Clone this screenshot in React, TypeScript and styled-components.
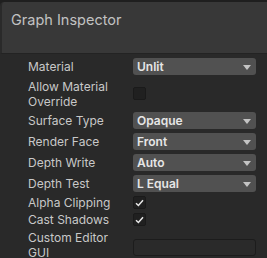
import {FC} from "react"
import styled, {createGlobalStyle} from "styled-components"

const GlobalStyle = createGlobalStyle`
  html, body {
    margin: 0;
    padding: 0;
    background: #1f1f1f;
  }
  body {
    font-family: Inter, "Noto Sans", sans-serif;
    -webkit-font-smoothing: antialiased;
  }
`

type Field =
	| {kind: "dropdown", value: string}
	| {kind: "checkbox", checked: boolean}
	| {kind: "text"}

interface IRow {
	label: string
	field: Field
	tall?: boolean
}

const rows: IRow[] = [
	{label: "Material", field: {kind: "dropdown", value: "Unlit"}},
	{label: "Allow Material Override", field: {kind: "checkbox", checked: false}, tall: true},
	{label: "Surface Type", field: {kind: "dropdown", value: "Opaque"}},
	{label: "Render Face", field: {kind: "dropdown", value: "Front"}},
	{label: "Depth Write", field: {kind: "dropdown", value: "Auto"}},
	{label: "Depth Test", field: {kind: "dropdown", value: "L Equal"}},
	{label: "Alpha Clipping", field: {kind: "checkbox", checked: true}},
	{label: "Cast Shadows", field: {kind: "checkbox", checked: true}},
	{label: "Custom Editor GUI", field: {kind: "text"}, tall: true},
]

const Arrow: FC = () => (
	<svg width="8" height="5" viewBox="0 0 8 5">
		<path d="M0 0 H8 L4 5 Z" fill="#c4c4c4"/>
	</svg>
)

const Check: FC = () => (
	<svg width="9" height="8" viewBox="0 0 9 8">
		<path d="M1 4.2 L3.4 6.5 L8 1.2" fill="none" stroke="#e8e8e8" strokeWidth="1.5"/>
	</svg>
)

const FieldView: FC<{field: Field}> = ({field}) => {
	if (field.kind === "dropdown") {
		return <Dropdown>
			<span>{field.value}</span>
			<Arrow/>
		</Dropdown>
	}
	if (field.kind === "checkbox") {
		return <CheckBox>{field.checked && <Check/>}</CheckBox>
	}
	return <TextField/>
}

const App: FC = () => {
	return <>
		<GlobalStyle/>
		<Window>
			<Header>
				<Title>Graph Inspector</Title>
			</Header>
			<Body>
				{rows.map((row) => (
					<Row key={row.label} $tall={row.tall} $compact={row.field.kind === "checkbox" && !row.tall}>
						<Label>{row.label}</Label>
						<FieldView field={row.field}/>
					</Row>
				))}
			</Body>
		</Window>
	</>
}
export default App

const Window = styled.div`
  width: 267px;
  height: 258px;
  overflow: hidden;
  padding-top: 2px;
  box-sizing: border-box;
  background: #1f1f1f;
  display: flex;
  flex-direction: column;
`

const Header = styled.div`
  height: 52px;
  flex-shrink: 0;
  background: #383838;
  border-top-left-radius: 4px;
  border-left: 2px solid #2a2a2a;
  border-bottom: 1px solid #232323;
  padding: 9px 0 0 9px;
  box-sizing: border-box;
`

const Title = styled.div`
  color: #c2c2c2;
  font-size: 14.5px;
  line-height: 18px;
`

const Body = styled.div`
  flex: 1;
  background: #292929;
  padding: 2px 11px 0 28px;
  display: flex;
  flex-direction: column;
`

const Row = styled.div<{$tall?: boolean, $compact?: boolean}>`
  display: grid;
  grid-template-columns: 105px 1fr;
  align-items: center;
  height: ${p => p.$tall ? 33 : p.$compact ? 17 : 21}px;
`

const Label = styled.div`
  color: #c8c8c8;
  font-size: 12px;
  line-height: 15px;
  padding-right: 8px;
`

const Dropdown = styled.div`
  height: 17px;
  background: #515151;
  border-radius: 3px;
  display: flex;
  align-items: center;
  justify-content: space-between;
  padding: 0 5px 0 4px;
  color: #e6e6e6;
  font-size: 12px;
  font-weight: 600;

  svg {
    margin-top: 1px;
  }
`

const CheckBox = styled.div`
  width: 13px;
  height: 13px;
  box-sizing: border-box;
  background: #202020;
  border: 1px solid #1a1a1a;
  border-radius: 2px;
  display: flex;
  align-items: center;
  justify-content: center;
`

const TextField = styled.div`
  height: 17px;
  margin-top: 6px;
  box-sizing: border-box;
  background: #2a2a2a;
  border: 1px solid #1c1c1c;
  border-radius: 3px;
`
